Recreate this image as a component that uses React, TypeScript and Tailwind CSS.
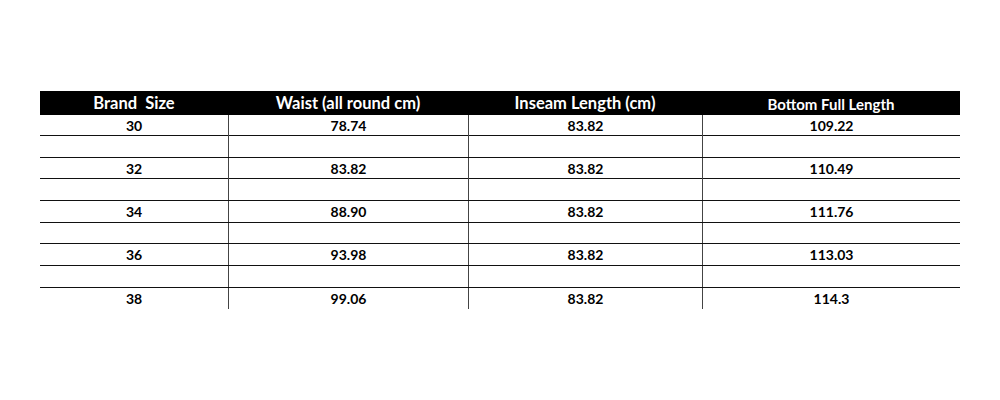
const rows = [
  { size: '30', waist: '78.74', inseam: '83.82', bottom: '109.22' },
  null,
  { size: '32', waist: '83.82', inseam: '83.82', bottom: '110.49' },
  null,
  { size: '34', waist: '88.90', inseam: '83.82', bottom: '111.76' },
  null,
  { size: '36', waist: '93.98', inseam: '83.82', bottom: '113.03' },
  null,
  { size: '38', waist: '99.06', inseam: '83.82', bottom: '114.3' },
];

const heights = ['h-[21px]', 'h-[22px]', 'h-[21px]', 'h-[22px]', 'h-[22px]', 'h-[21px]', 'h-[22px]', 'h-[22px]', 'h-[21px]'];

export default function App() {
  return (
    <div className="w-[1000px] h-[400px] bg-white pt-[91px] pl-[40px]" style={{ fontFamily: 'Lato, "Open Sans", sans-serif' }}>
      <div className="w-[920px]">
        {/* Header */}
        <div className="grid grid-cols-[188px_240px_234px_258px] h-[24px] bg-black text-white font-bold items-center">
          <div className="text-center text-[16.5px] whitespace-pre">Brand  Size</div>
          <div className="text-center text-[16.5px]">Waist (all round cm)</div>
          <div className="text-center text-[16.5px]">Inseam Length (cm)</div>
          <div className="text-center text-[15px] pt-[2px]">Bottom Full Length</div>
        </div>

        {rows.map((r, i) => (
          <div
            key={i}
            className={`grid grid-cols-[188px_240px_234px_258px] ${heights[i]} text-[14px] font-bold text-black ${
              i < rows.length - 1 ? 'border-b border-[#111]' : ''
            }`}
          >
            <div className="flex items-center justify-center">{r?.size}</div>
            <div className="flex items-center justify-center border-l border-[#444]">{r?.waist}</div>
            <div className="flex items-center justify-center border-l border-[#444]">{r?.inseam}</div>
            <div className="flex items-center justify-center border-l border-[#444]">{r?.bottom}</div>
          </div>
        ))}
      </div>
    </div>
  );
}
